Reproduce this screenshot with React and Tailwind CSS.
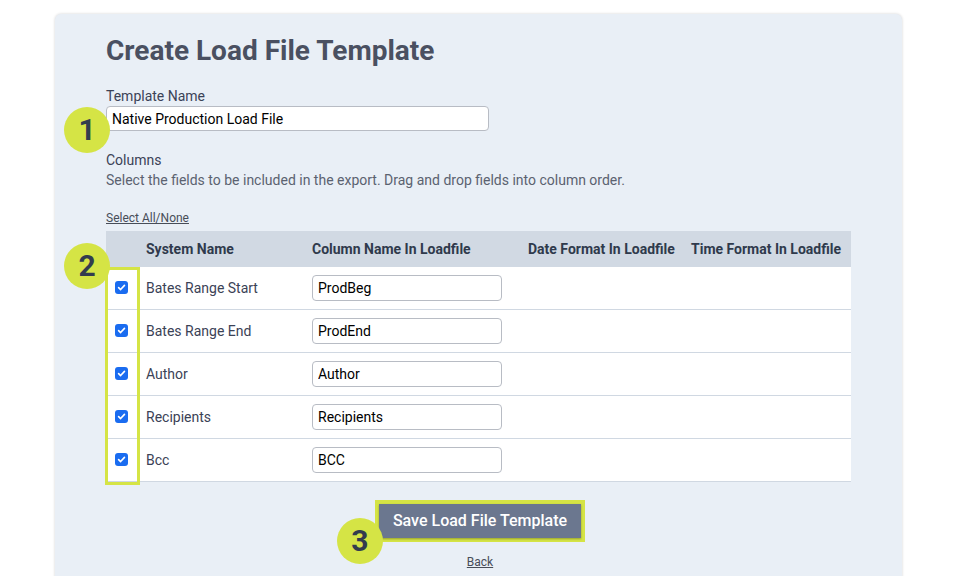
import React from "react";

const rows = [
  ["Bates Range Start", "ProdBeg"],
  ["Bates Range End", "ProdEnd"],
  ["Author", "Author"],
  ["Recipients", "Recipients"],
  ["Bcc", "BCC"],
];

function Badge({ n, className }) {
  return (
    <div
      className={
        "absolute w-[46px] h-[46px] rounded-full bg-[#d5e445] flex items-center justify-center text-[30px] font-bold text-[#333c4e] leading-none " +
        className
      }
    >
      {n}
    </div>
  );
}

function Check() {
  return (
    <div className="w-[13px] h-[13px] rounded-[3px] bg-[#1a6cf0] flex items-center justify-center -translate-y-[1px]">
      <svg width="9" height="9" viewBox="0 0 10 10">
        <path d="M1.8 5.2 L4 7.3 L8.3 2.6" fill="none" stroke="white" strokeWidth="1.8" strokeLinecap="round" strokeLinejoin="round" />
      </svg>
    </div>
  );
}

export default function App() {
  return (
    <div className="w-[962px] h-[576px] bg-white overflow-hidden" style={{ fontFamily: "Roboto, 'Liberation Sans', sans-serif" }}>
      <div className="ml-[55px] mt-[14px] w-[847px] h-[600px] bg-[#e9eff6] rounded-[6px] shadow-[0_0_3px_rgba(0,0,0,0.18)] px-[51px] pt-[20px] relative">
        <h1 className="text-[28px] font-bold text-[#4a5061] leading-[34px]">Create Load File Template</h1>
        <div className="mt-[20px] text-[14px] text-[#3b4256] leading-[16px]">Template Name</div>
        <div className="mt-[2px] relative">
          <input
            readOnly
            value="Native Production Load File"
            className="w-[383px] h-[25px] bg-white border border-[#b8bcc4] rounded-[4px] pl-[5px] text-[14px] text-black outline-none"
          />
          <Badge n="1" className="left-[-42px] top-[1px]" />
        </div>
        <div className="mt-[21px] text-[14px] text-[#3b4256] leading-[16px]">Columns</div>
        <div className="mt-[4px] text-[14px] text-[#5b6270] leading-[16px]">
          Select the fields to be included in the export. Drag and drop fields into column order.
        </div>
        <div className="mt-[23px] text-[12px] text-[#474d58] underline leading-[14px]">Select All/None</div>
        <div className="mt-[6px] relative">
          <div className="flex h-[36px] bg-[#d1d9e3] items-center text-[14px] font-bold text-[#2f3a4c]">
            <div className="w-[40px]" />
            <div className="w-[166px]">System Name</div>
            <div className="w-[216px]">Column Name In Loadfile</div>
            <div className="w-[163px]">Date Format In Loadfile</div>
            <div>Time Format In Loadfile</div>
          </div>
          {rows.map(([s, c]) => (
            <div key={s} className="flex h-[43px] items-center bg-white border-b border-[#d0d8e2] text-[14px] text-[#3b4256]">
              <div className="w-[40px] pl-[9px]">
                <Check />
              </div>
              <div className="w-[166px]">{s}</div>
              <div className="w-[216px]">
                <input
                  readOnly
                  value={c}
                  className="w-[190px] h-[26px] bg-white border border-[#b8bcc4] rounded-[4px] pl-[5px] text-[14px] text-black outline-none"
                />
              </div>
            </div>
          ))}
          <div className="absolute left-[-1px] top-[36px] w-[35px] h-[218px] border-[3px] border-[#d5e445]" />
          <Badge n="2" className="left-[-42px] top-[12px]" />
        </div>
        <div className="flex flex-col items-center mt-[18px] pl-[3px]">
          <div className="relative">
            <div className="border-[4px] border-[#d5e445]">
              <div className="bg-[#6b778f] text-white text-[16px] font-medium h-[34px] px-[14px] flex items-center shadow-[0_1px_2px_rgba(0,0,0,0.3)]">
                Save Load File Template
              </div>
            </div>
            <Badge n="3" className="left-[-38px] top-[18px]" />
          </div>
          <div className="mt-[11px] text-[12px] text-[#474d58] underline">Back</div>
        </div>
      </div>
    </div>
  );
}
